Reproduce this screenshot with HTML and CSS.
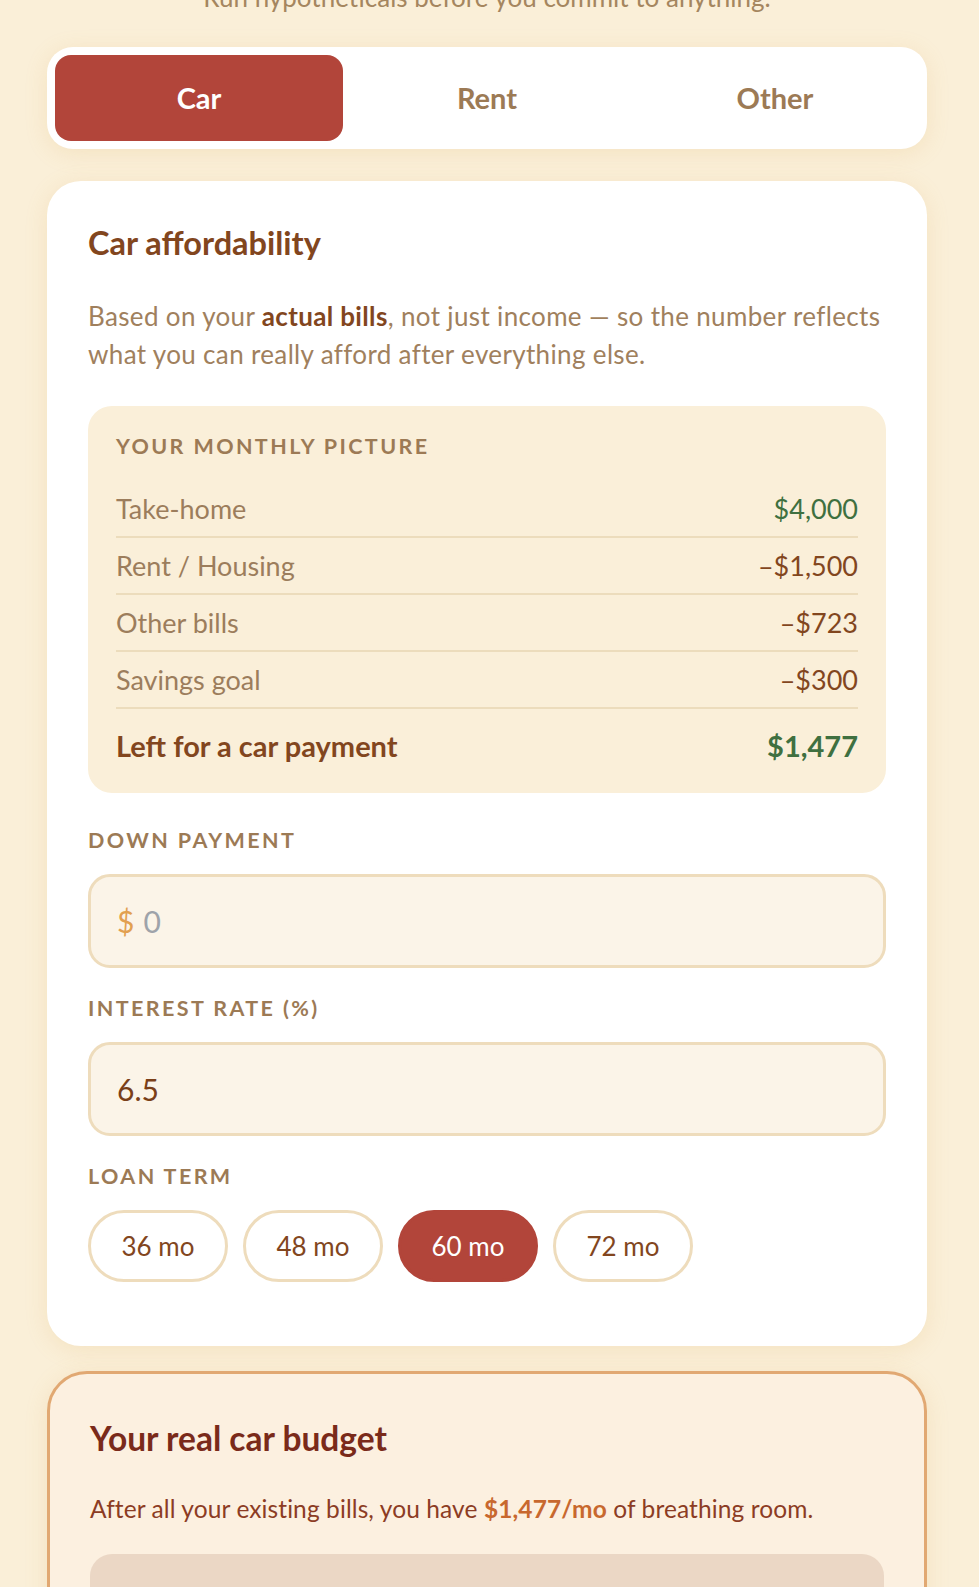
FILE: index.html
```html
<!DOCTYPE html>
<html lang="en">
<head>
    <meta charset="UTF-8">
    <title>What if</title>
    <link rel="stylesheet" href="styles.css">
</head>
<body>
    <div class="page">
        <p class="intro">Run hypotheticals before you commit to anything.</p>

        <div class="tabs">
            <div class="tab active">Car</div>
            <div class="tab">Rent</div>
            <div class="tab">Other</div>
        </div>

        <div class="card">
            <h2 class="card-title">Car affordability</h2>
            <p class="card-text">Based on your <b>actual bills</b>, not just income — so the number reflects what you can really afford after everything else.</p>

            <div class="picture">
                <div class="label">Your monthly picture</div>
                <div class="row"><span>Take-home</span><span class="plus">$4,000</span></div>
                <div class="row"><span>Rent / Housing</span><span class="minus">–$1,500</span></div>
                <div class="row"><span>Other bills</span><span class="minus">–$723</span></div>
                <div class="row"><span>Savings goal</span><span class="minus">–$300</span></div>
                <div class="row total"><span>Left for a car payment</span><span class="plus">$1,477</span></div>
            </div>

            <div class="label field-label first">Down payment</div>
            <div class="input">
                <span class="prefix">$</span>
                <span class="placeholder">0</span>
            </div>

            <div class="label field-label">Interest rate (%)</div>
            <div class="input">
                <span class="value">6.5</span>
            </div>

            <div class="label field-label">Loan term</div>
            <div class="terms">
                <div class="term">36 mo</div>
                <div class="term">48 mo</div>
                <div class="term active">60 mo</div>
                <div class="term">72 mo</div>
            </div>
        </div>

        <div class="result">
            <h2 class="result-title">Your real car budget</h2>
            <p class="result-text">After all your existing bills, you have <b>$1,477/mo</b> of breathing room.</p>
            <div class="result-box"></div>
        </div>
    </div>
</body>
</html>
```

FILE: styles.css
```css
*{
    margin: 0;
    padding: 0;
    box-sizing: border-box;
}
body{
    background: #faefd8;
    font-family: "Lato", "Noto Sans", sans-serif;
    color: #9c7a55;
    overflow: hidden;
}
.page{
    width: 880px;
    margin-left: 47px;
}
.intro{
    font-size: 26px;
    line-height: 30px;
    text-align: center;
    margin-top: -18px;
    margin-bottom: 35px;
    color: #a5865f;
}
.tabs{
    display: flex;
    background: #fff;
    border-radius: 26px;
    padding: 8px;
    box-shadow: 0 4px 22px rgba(220, 170, 90, 0.18);
}
.tab{
    flex: 1;
    height: 86px;
    line-height: 86px;
    text-align: center;
    font-size: 29px;
    font-weight: 700;
    color: #9c7a55;
    border-radius: 16px;
}
.tab.active{
    background: #b2453a;
    color: #fff;
}
.card{
    margin-top: 32px;
    background: #fff;
    border-radius: 34px;
    padding: 44px 41px 64px;
    box-shadow: 0 4px 22px rgba(220, 170, 90, 0.18);
}
.card-title{
    font-size: 32.5px;
    line-height: 36px;
    font-weight: 700;
    color: #82461e;
}
.card-text{
    margin-top: 36px;
    font-size: 26px;
    line-height: 38px;
    letter-spacing: 0.35px;
    color: #a0805d;
}
.card-text b{
    color: #82461e;
}
.picture{
    margin-top: 33px;
    background: #faefd9;
    border-radius: 24px;
    padding: 28px 28px 33px;
}
.label{
    font-size: 21.5px;
    line-height: 24px;
    font-weight: 700;
    letter-spacing: 2.4px;
    text-transform: uppercase;
    color: #9c7a55;
}
.picture .label{
    margin-bottom: 23px;
}
.row{
    display: flex;
    justify-content: space-between;
    font-size: 27px;
    line-height: 28px;
    padding: 14px 0 13px;
    border-bottom: 2px solid #ecdcbc;
    color: #9c7d5c;
}
.row.total{
    border-bottom: none;
    padding: 23px 0 0;
    font-weight: 700;
    font-size: 29px;
    color: #82461e;
}
.plus{
    color: #3f7040;
}
.minus{
    color: #82461e;
}
.field-label{
    margin-top: 28px;
    margin-bottom: 22px;
}
.field-label.first{
    margin-top: 35px;
}
.input{
    height: 94px;
    background: #fbf4e8;
    border: 3px solid #eedcbc;
    border-radius: 22px;
    display: flex;
    align-items: center;
    padding: 0 26px;
    font-size: 30px;
}
.prefix{
    color: #e2a050;
    margin-right: 9px;
}
.placeholder{
    color: #9ea3aa;
}
.value{
    color: #7a3f18;
}
.terms{
    display: flex;
    gap: 15px;
}
.term{
    width: 140px;
    height: 72px;
    line-height: 66px;
    text-align: center;
    border: 3px solid #eedcbc;
    border-radius: 36px;
    font-size: 26px;
    color: #82461e;
}
.term.active{
    background: #b2453a;
    border-color: #b2453a;
    color: #fff;
}
.result{
    margin-top: 25px;
    background: #fcf0e0;
    border: 3px solid #e1a872;
    border-radius: 40px;
    padding: 46px 40px 40px;
    box-shadow: 0 4px 22px rgba(220, 170, 90, 0.18);
}
.result-title{
    font-size: 33.5px;
    line-height: 36px;
    font-weight: 700;
    color: #7a2a1a;
}
.result-text{
    margin-top: 38px;
    font-size: 24.5px;
    line-height: 30px;
    letter-spacing: 0.1px;
    color: #8c3c24;
}
.result-text b{
    color: #c8682e;
}
.result-box{
    margin-top: 30px;
    height: 200px;
    background: #ebd7c5;
    border-radius: 22px;
}
```
